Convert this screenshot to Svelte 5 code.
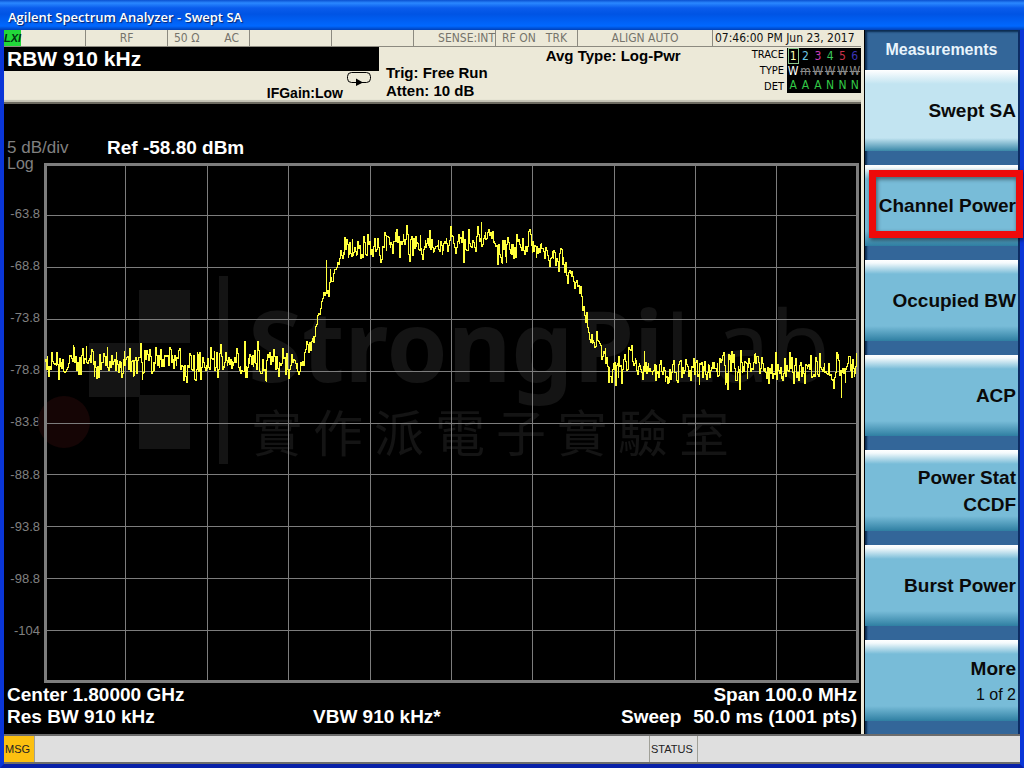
<script>
    const softkeys = [
        { lines: ['Swept SA'] },
        { lines: ['Channel Power'] },
        { lines: ['Occupied BW'] },
        { lines: ['ACP'] },
        { lines: ['Power Stat', 'CCDF'] },
        { lines: ['Burst Power'] },
        { lines: ['More'], note: '1 of 2' }
    ]
    const marked = 'Channel Power'
    let active = $state('Swept SA')

    const levels = ['-63.8', '-68.8', '-73.8', '-78.8', '-83.8', '-88.8', '-93.8', '-98.8', '-104']

    const traces = [
        { no: 1, color: '#ffffb0', type: 'W', det: 'A' },
        { no: 2, color: '#6cc4e4', type: 'm', det: 'A' },
        { no: 3, color: '#c83cb4', type: 'W', det: 'A' },
        { no: 4, color: '#3cc85c', type: 'W', det: 'N' },
        { no: 5, color: '#c8324c', type: 'W', det: 'N' },
        { no: 6, color: '#3c34b4', type: 'W', det: 'N' }
    ]

    // Graticule, ten by ten divisions
    const W = 815
    const H = 520
    const cols = [81, 163, 244, 326, 407, 488, 570, 651, 732]
    const rows = [52, 104, 156, 208, 260, 311, 363, 415, 467]

    // Mean level of the trace as [x, y] knots
    const shape = [
        [2, 198], [60, 200], [120, 199], [180, 201], [245, 200], [256, 200],
        [264, 186], [269, 173], [277, 142], [282, 126], [287, 113], [292, 107],
        [296, 96], [300, 82], [305, 86], [314, 84], [340, 81], [356, 76],
        [410, 80], [440, 79], [465, 84], [490, 80], [498, 84], [507, 90],
        [518, 99], [527, 114], [535, 128], [540, 148], [546, 165], [553, 182],
        [558, 197], [566, 206], [584, 202], [620, 205], [700, 206], [770, 207],
        [813, 206]
    ]

    // Single excursions that stand clear of the noise
    const spikes = [
        [42, 182], [52, 215], [77, 214], [96, 180], [98, 216], [139, 217],
        [156, 216], [200, 178], [221, 217], [282, 96], [296, 87], [352, 66],
        [365, 98], [419, 67], [462, 99], [486, 71], [564, 219], [571, 222],
        [584, 184], [683, 226], [696, 187], [731, 189], [760, 220], [797, 234],
        [812, 189]
    ]

    function level(x) {
        let i = 1
        while (i < shape.length - 1 && shape[i][0] < x) i++
        const [x0, y0] = shape[i - 1]
        const [x1, y1] = shape[i]
        return y0 + ((y1 - y0) * (x - x0)) / (x1 - x0)
    }

    // 1001 sweep points, several of them can share a pixel column
    function buildTrace() {
        let seed = 4711
        const rand = () => {
            seed = (seed * 16807) % 2147483647
            return seed / 2147483647
        }
        let d = 'M1.5 198.5'
        let prev = 0
        let last = 0
        for (let i = 0; i < 1001; i++) {
            const x = 1 + Math.round(i * 0.811)
            const slope = x > 244 && x < 300 || x > 495 && x < 560
            const spread = slope ? 10 : 15
            prev = prev * 0.35 + (rand() + rand() + rand() - 1.5) * spread
            const spike = spikes.find(s => s[0] === x)
            const y = spike && x !== last ? spike[1] : Math.round(level(x) + prev)
            d += `H${x + 0.5}V${y + 0.5}`
            last = x
        }
        return d
    }

    const trace = buildTrace()
    const mark = '實作派電子實驗室'
    const markX = [...mark].map((_, i) => 208 + i * 61).join(' ')
</script>

<div class="window">
    <header class="titlebar">Agilent Spectrum Analyzer - Swept SA</header>

    <main class="body">
        <section class="screen">
            <div class="strip">
                <div><span class="lxi">LXI</span></div>
                <div class="center">RF</div>
                <div class="split"><span>50 Ω</span><span>AC</span></div>
                <div></div>
                <div></div>
                <div class="end">SENSE:INT</div>
                <div class="split"><span>RF ON</span><span>TRK</span></div>
                <div class="center">ALIGN AUTO</div>
                <div class="clock">07:46:00 PM Jun 23, 2017</div>
            </div>

            <div class="settings">
                <div class="left">
                    <div class="rbw">RBW 910 kHz</div>
                    <svg class="loop" viewBox="0 0 24 14" width="24" height="14" aria-hidden="true">
                        <rect x="0.5" y="0.5" width="23" height="10" rx="4" fill="none" stroke="#000" />
                        <path d="M9 6.5 L16 10.5 L9 14 Z" fill="#000" />
                    </svg>
                    <div class="ifgain">IFGain:Low</div>
                </div>
                <div class="trig">
                    <span>Trig: Free Run</span>
                    <span>Atten: 10 dB</span>
                </div>
                <div class="avg">Avg Type: Log-Pwr</div>
                <div class="tracelabels">
                    <span>TRACE</span>
                    <span>TYPE</span>
                    <span>DET</span>
                </div>
                <div class="tracebox">
                    {#each traces as t}
                        <div class="tracecol">
                            <span class="no" class:current={t.no === 1} style:color={t.color}>{t.no}</span>
                            <span class="type" class:off={t.no > 1}>{t.type}</span>
                            <span class="det">{t.det}</span>
                        </div>
                    {/each}
                </div>
            </div>

            <div class="display">
                <div class="reference">
                    <span class="scale">5 dB/div</span>
                    <span>Ref -58.80 dBm</span>
                </div>

                <div class="plot">
                    <div class="axis">
                        <span class="log">Log</span>
                        <div class="levels">
                            {#each levels as l}
                                <span>{l}</span>
                            {/each}
                        </div>
                    </div>
                    <svg class="graph" viewBox="0 0 {W} {H}" role="img" aria-label="Spectrum trace">
                        <g fill="#141414">
                            <rect x="95" y="127" width="51" height="53" />
                            <rect x="45" y="180" width="51" height="54" />
                            <rect x="95" y="232" width="51" height="54" />
                            <rect x="175" y="113" width="9" height="188" />
                            <circle cx="20" cy="259" r="26" fill="#150505" />
                            <text class="brand" x="204" y="219"><tspan class="strong">StrongPi</tspan>Lab</text>
                            <text class="brandsub" x={markX} y="289">{mark}</text>
                        </g>
                        <g stroke="#7d7d7d" shape-rendering="crispEdges">
                            {#each cols as x}
                                <line x1={x + 0.5} x2={x + 0.5} y1="2" y2={H - 2} />
                            {/each}
                            {#each rows as y}
                                <line x1="2" x2={W - 2} y1={y + 0.5} y2={y + 0.5} />
                            {/each}
                            <rect x="1.5" y="1.5" width={W - 3} height={H - 3} fill="none" stroke-width="3" />
                        </g>
                        <path class="trace" d={trace} />
                    </svg>
                </div>

                <div class="readout">
                    <span>Center 1.80000 GHz</span>
                    <span></span>
                    <span>Span 100.0 MHz</span>
                    <span>Res BW 910 kHz</span>
                    <span>VBW 910 kHz*</span>
                    <span class="sweep"><span>Sweep</span><span>50.0 ms (1001 pts)</span></span>
                </div>
            </div>
        </section>

        <nav class="panel">
            <h2>Measurements</h2>
            {#each softkeys as key}
                <button
                    class:active={active === key.lines[0]}
                    class:marked={marked === key.lines[0]}
                    onclick={() => (active = key.lines[0])}
                >
                    {#each key.lines as line}
                        <span>{line}</span>
                    {/each}
                    {#if key.note}
                        <span class="note">{key.note}</span>
                    {/if}
                </button>
            {/each}
        </nav>
    </main>

    <footer class="statusbar">
        <div class="msg">MSG</div>
        <div class="message"></div>
        <div class="status">STATUS</div>
        <div class="rest"></div>
    </footer>
</div>

<style>
    :global(body) {
        margin: 0;
        background: #0a32c8;
    }

    .window {
        box-sizing: border-box;
        min-height: 100vh;
        display: flex;
        flex-direction: column;
        border: solid #0a36d8;
        border-width: 0 4px 4px;
        border-bottom-color: #0820a8;
        font-family: "Liberation Sans", Arial, sans-serif;
    }

    .titlebar {
        height: 30px;
        margin: 0 -4px;
        padding: 4px 8px 0;
        box-sizing: border-box;
        background: linear-gradient(#0a50d0 0, #2a88ff 3px, #0a5cec 8px, #0054e4 14px, #0068ff 26px, #0040b8 30px);
        color: #fff;
        font: 600 13px/26px "Open Sans", "Noto Sans", sans-serif;
        text-shadow: 1px 1px 1px #0a246a;
    }

    .body {
        flex: 1;
        display: flex;
    }

    .screen {
        flex: 1;
        min-width: 0;
        display: flex;
        flex-direction: column;
        background: #ece9d8;
    }

    .strip {
        display: grid;
        grid-template-columns: repeat(7, 82fr) 135fr 148fr;
        height: 17px;
        box-sizing: border-box;
        border-bottom: 1px solid #8c8a80;
        color: #76746c;
        font: 12px/17px "DejaVu Sans Condensed", "DejaVu Sans", sans-serif;
        white-space: nowrap;
    }

    .strip > div {
        min-width: 0;
        border-right: 1px solid #8c8a80;
    }

    .center {
        text-align: center;
    }

    .end {
        text-align: right;
    }

    .split {
        display: flex;
        justify-content: space-between;
        padding: 0 10px 0 6px;
    }

    .strip > .clock {
        padding-left: 2px;
        border-right: 0;
        color: #111;
    }

    .lxi {
        display: block;
        width: 17px;
        height: 16px;
        background: #22d83a;
        color: #031;
        font: italic bold 11px/16px "Liberation Sans", Arial, sans-serif;
    }

    .settings {
        display: flex;
        height: 57px;
        box-sizing: border-box;
        border-bottom: 2px solid #6c6a60;
        box-shadow: inset 0 -2px 1px #c4c2b4;
        color: #000;
        font-weight: bold;
        white-space: nowrap;
    }

    .left {
        width: 375px;
        display: grid;
        grid-template-columns: 1fr 24px;
        grid-template-rows: 24px 14px 16px;
        column-gap: 4px;
        padding-right: 8px;
        box-sizing: border-box;
    }

    .rbw {
        grid-column: 1 / 3;
        margin-right: -8px;
        padding-left: 3px;
        background: #000;
        color: #fff;
        font-size: 21px;
        line-height: 24px;
    }

    .loop {
        grid-column: 2;
        margin-top: 1px;
    }

    .ifgain {
        grid-column: 1;
        text-align: right;
        font-size: 14px;
        line-height: 16px;
    }

    .trig {
        display: flex;
        flex-direction: column;
        padding: 17px 0 0 7px;
        font-size: 15px;
        line-height: 18px;
    }

    .avg {
        padding-left: 58px;
        font-size: 15px;
        line-height: 18px;
    }

    .tracelabels {
        flex: 1;
        display: flex;
        flex-direction: column;
        align-items: flex-end;
        padding-right: 3px;
        font: 11px/16px "DejaVu Sans Condensed", "DejaVu Sans", sans-serif;
    }

    .tracebox {
        width: 74px;
        height: 45px;
        margin-top: 1px;
        display: flex;
        background: #000;
        font: 12px/14px "DejaVu Sans Condensed", "DejaVu Sans", sans-serif;
    }

    .tracecol {
        flex: 1;
        display: flex;
        flex-direction: column;
        align-items: center;
    }

    .no {
        width: 9px;
        border: 1px solid transparent;
        text-align: center;
    }

    .current {
        border-color: #8cc88c;
    }

    .type {
        color: #fff;
    }

    .off {
        color: #8c8c8c;
        text-decoration: line-through;
    }

    .det {
        color: #32c846;
    }

    .display {
        flex: 1;
        padding: 36px 2px 6px 3px;
        background: #000;
        color: #fff;
        font-size: 19px;
        font-weight: bold;
        line-height: 22px;
        white-space: nowrap;
    }

    .reference {
        display: flex;
        height: 15px;
        line-height: 16px;
    }

    .scale {
        width: 100px;
        color: #808080;
        font-size: 17px;
        font-weight: normal;
    }

    .plot {
        display: flex;
    }

    .axis {
        width: 37px;
        box-sizing: border-box;
        display: flex;
        flex-direction: column;
        padding-bottom: 26px;
        color: #808080;
        font-size: 13px;
        font-weight: normal;
    }

    .log {
        margin-bottom: 15px;
        font-size: 16px;
        line-height: 18px;
    }

    .levels {
        flex: 1;
        display: flex;
        flex-direction: column;
        justify-content: space-around;
        align-items: flex-end;
        padding-right: 4px;
        line-height: 16px;
    }

    .graph {
        flex: 1;
        min-width: 0;
        display: block;
        margin-top: 8px;
        overflow: visible;
    }

    .brand {
        font: 98px "Noto Sans", sans-serif;
    }

    .strong {
        font-weight: bold;
    }

    .brandsub {
        font: 50px "Noto Sans CJK TC", sans-serif;
    }

    .trace {
        fill: none;
        stroke: #ffff3c;
        stroke-width: 1;
        shape-rendering: crispEdges;
    }

    .readout {
        display: grid;
        grid-template-columns: 36% 1fr auto;
        padding: 1px 2px 0 0;
    }

    .readout > :nth-child(3n) {
        text-align: right;
    }

    .sweep {
        display: flex;
        justify-content: flex-end;
        gap: 12px;
    }

    .panel {
        width: 153px;
        display: flex;
        flex-direction: column;
        gap: 14px;
        padding-bottom: 13px;
        border-left: 1px solid #000;
        border-right: 2px solid #0c2c64;
        margin-left: 3px;
        background: #336699;
        box-shadow: -3px 0 #ece9d8, inset 2px 2px 2px #0c2c50;
    }

    h2 {
        margin: 0 0 -14px;
        color: #e8f4fc;
        font-size: 16px;
        line-height: 40px;
        text-align: center;
    }

    button {
        position: relative;
        flex: 1 0 81px;
        display: flex;
        flex-direction: column;
        align-items: flex-end;
        justify-content: center;
        margin: 0;
        padding: 0 2px 0 0;
        border: 0;
        background: linear-gradient(#fff 0, #f4fafc 3px, #78bcd8 14px, #78bcd8 66px, #2f7fa2 100%);
        color: #0a0a0a;
        font: bold 19px/27px "Liberation Sans", Arial, sans-serif;
        white-space: nowrap;
    }

    .active {
        background: linear-gradient(#fff 0, #c2e4f1 14px, #c2e4f1 68px, #3a88a8 100%);
    }

    .marked::after {
        content: "";
        position: absolute;
        inset: 5px -5px 8px 4px;
        border: 7px solid #ee0a0a;
        box-shadow: 1px 2px 4px #0008, inset 1px 2px 4px #0008;
    }

    .note {
        font-size: 16px;
        font-weight: normal;
        line-height: 25px;
    }

    .statusbar {
        display: flex;
        height: 30px;
        box-sizing: border-box;
        border-top: 2px solid #6c6c6c;
        border-bottom: 2px solid #6c6c6c;
        background: #dfdfdf;
        color: #222;
        font-size: 11px;
        line-height: 26px;
    }

    .statusbar > div {
        border-right: 1px solid #a0a098;
    }

    .msg {
        width: 29px;
        padding-left: 1px;
        background: #fcc010;
    }

    .message {
        flex: 614;
    }

    .status {
        width: 46px;
        padding-left: 1px;
    }

    .statusbar > .rest {
        flex: 322;
        border-right: 0;
    }
</style>
